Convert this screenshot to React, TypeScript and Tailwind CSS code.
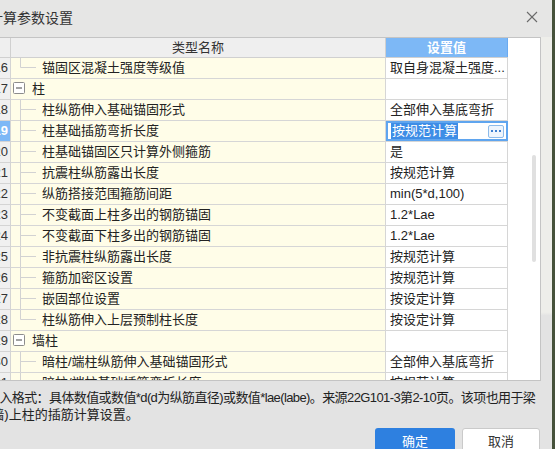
import React from 'react';

type Kind = 'group' | 'mid' | 'last';

type Row = {
  no: number;
  name: string;
  value: string;
  kind: Kind;
  selected?: boolean;
};

const rows: Row[] = [
  { no: 16, name: '锚固区混凝土强度等级值', value: '取自身混凝土强度...', kind: 'last' },
  { no: 17, name: '柱', value: '', kind: 'group' },
  { no: 18, name: '柱纵筋伸入基础锚固形式', value: '全部伸入基底弯折', kind: 'mid' },
  { no: 19, name: '柱基础插筋弯折长度', value: '按规范计算', kind: 'mid', selected: true },
  { no: 20, name: '柱基础锚固区只计算外侧箍筋', value: '是', kind: 'mid' },
  { no: 21, name: '抗震柱纵筋露出长度', value: '按规范计算', kind: 'mid' },
  { no: 22, name: '纵筋搭接范围箍筋间距', value: 'min(5*d,100)', kind: 'mid' },
  { no: 23, name: '不变截面上柱多出的钢筋锚固', value: '1.2*Lae', kind: 'mid' },
  { no: 24, name: '不变截面下柱多出的钢筋锚固', value: '1.2*Lae', kind: 'mid' },
  { no: 25, name: '非抗震柱纵筋露出长度', value: '按规范计算', kind: 'mid' },
  { no: 26, name: '箍筋加密区设置', value: '按规范计算', kind: 'mid' },
  { no: 27, name: '嵌固部位设置', value: '按设定计算', kind: 'mid' },
  { no: 28, name: '柱纵筋伸入上层预制柱长度', value: '按设定计算', kind: 'last' },
  { no: 29, name: '墙柱', value: '', kind: 'group' },
  { no: 30, name: '暗柱/端柱纵筋伸入基础锚固形式', value: '全部伸入基底弯折', kind: 'mid' },
  { no: 31, name: '暗柱/端柱基础插筋弯折长度', value: '按规范计算', kind: 'mid' },
];

function TreeMark({ kind }: { kind: Kind }) {
  if (kind === 'group') {
    return (
      <svg width="21" height="20" className="shrink-0">
        <rect x="2.5" y="3.5" width="11" height="11" fill="#fff" stroke="#8c8c8c" rx="1" />
        <line x1="5" y1="9" x2="11" y2="9" stroke="#444" />
      </svg>
    );
  }
  return (
    <svg width="31" height="20" className="shrink-0">
      <line x1="9.5" y1="0" x2="9.5" y2={kind === 'last' ? 9.5 : 20} stroke="#d2d2d2" />
      <line x1="9.5" y1="9.5" x2="25" y2="9.5" stroke="#d2d2d2" />
    </svg>
  );
}

function TableRow({ row }: { row: Row }) {
  return (
    <div className="flex h-[21px] shrink-0">
      <div
        className={`w-[11px] flex justify-end items-center overflow-hidden pr-[2px] border-r border-b border-[#d4d4d4] ${
          row.selected ? 'bg-[#7db8f6] text-white font-bold' : 'bg-[#f0f0f0] text-[#333]'
        }`}
      >
        <span className="whitespace-nowrap">{row.no}</span>
      </div>
      <div className="w-[375px] flex items-center bg-[#fffde8] border-r border-b border-[#d6d6d6] text-[#222] whitespace-nowrap overflow-hidden">
        <TreeMark kind={row.kind} />
        <span>{row.name}</span>
      </div>
      {row.selected ? (
        <div className="w-[122px] flex items-center pl-[5px] pr-[4px] bg-white shadow-[inset_0_0_0_2px_#5fa5ef] border-b border-[#d6d6d6]">
          <span className="bg-[#3d8de6] text-white leading-[16px] px-[1px]">{row.value}</span>
          <div className="ml-auto w-[16px] h-[13px] rounded-[2px] border border-[#8dbbea] bg-[#eef5fd] flex items-center justify-center gap-[2px]">
            <span className="w-[2px] h-[2px] bg-[#3d7fd0]" />
            <span className="w-[2px] h-[2px] bg-[#3d7fd0]" />
            <span className="w-[2px] h-[2px] bg-[#3d7fd0]" />
          </div>
        </div>
      ) : (
        <div className="w-[122px] flex items-center pl-[4px] bg-white border-r border-b border-[#d6d6d6] text-[#222] whitespace-nowrap overflow-hidden">
          {row.value}
        </div>
      )}
    </div>
  );
}

export default function App() {
  return (
    <div className="w-[555px] h-[449px] overflow-hidden flex font-['Liberation_Sans','Noto_Sans_CJK_SC',sans-serif] text-[13px]">
      <div className="w-[552px] h-full flex flex-col bg-[#e3e3e3]">
        {/* title bar */}
        <div className="h-[37px] shrink-0 flex items-center bg-[#e6e6e5]">
          <span className="ml-[-11px] text-[14px] text-[#333] whitespace-nowrap">计算参数设置</span>
          <svg width="12" height="12" className="ml-auto mr-[14px] mb-[3px]">
            <line x1="1" y1="1" x2="11" y2="11" stroke="#6a6a6a" strokeWidth="1.1" />
            <line x1="11" y1="1" x2="1" y2="11" stroke="#6a6a6a" strokeWidth="1.1" />
          </svg>
        </div>

        {/* table */}
        <div className="flex shrink-0">
          <div className="w-[541px] h-[344px] border-t border-r border-b border-[#c4c4c4] bg-white flex overflow-hidden">
            <div className="w-[508px] flex flex-col">
              <div className="h-[20px] shrink-0 flex border-b border-[#d0d0d0]">
                <div className="w-[11px] bg-[#efefef] border-r border-[#d0d0d0]" />
                <div className="w-[375px] bg-[#efefef] flex items-center justify-center text-[#333] border-r border-[#d0d0d0]">
                  类型名称
                </div>
                <div className="w-[122px] bg-[#7db8f6] flex items-center justify-center text-white font-bold border-r border-[#6aaaf0]">
                  设置值
                </div>
              </div>
              {rows.map((r) => (
                <TableRow key={r.no} row={r} />
              ))}
            </div>
            <div className="flex-1 bg-white pl-[24px] pt-[117px]">
              <div className="w-[4px] h-[107px] rounded-full bg-[#e0e0e0]" />
            </div>
          </div>
          <div className="flex-1 bg-[linear-gradient(to_bottom,#eeeeea_0%,#eeeeea_80%,#e3e3e3_81%)]" />
        </div>

        {/* description */}
        <div className="pt-[8px] text-[#222] leading-[17px] whitespace-nowrap">
          <div className="ml-[-13px] tracking-[-0.6px]">输入格式：具体数值或数值*d(d为纵筋直径)或数值*lae(labe)。来源22G101-3第2-10页。该项也用于梁</div>
          <div className="ml-[-13px]">(墙)上柱的插筋计算设置。</div>
        </div>

        {/* buttons */}
        <div className="mt-[5px] flex justify-end gap-[7px] pr-[12px]">
          <button className="w-[80px] h-[28px] rounded-[3px] bg-[#2e80e0] text-white">确定</button>
          <button className="w-[78px] h-[28px] rounded-[3px] bg-white border border-[#cacaca] text-[#333]">取消</button>
        </div>
      </div>
      <div className="w-[3px] h-full bg-[#46523b]" />
    </div>
  );
}
